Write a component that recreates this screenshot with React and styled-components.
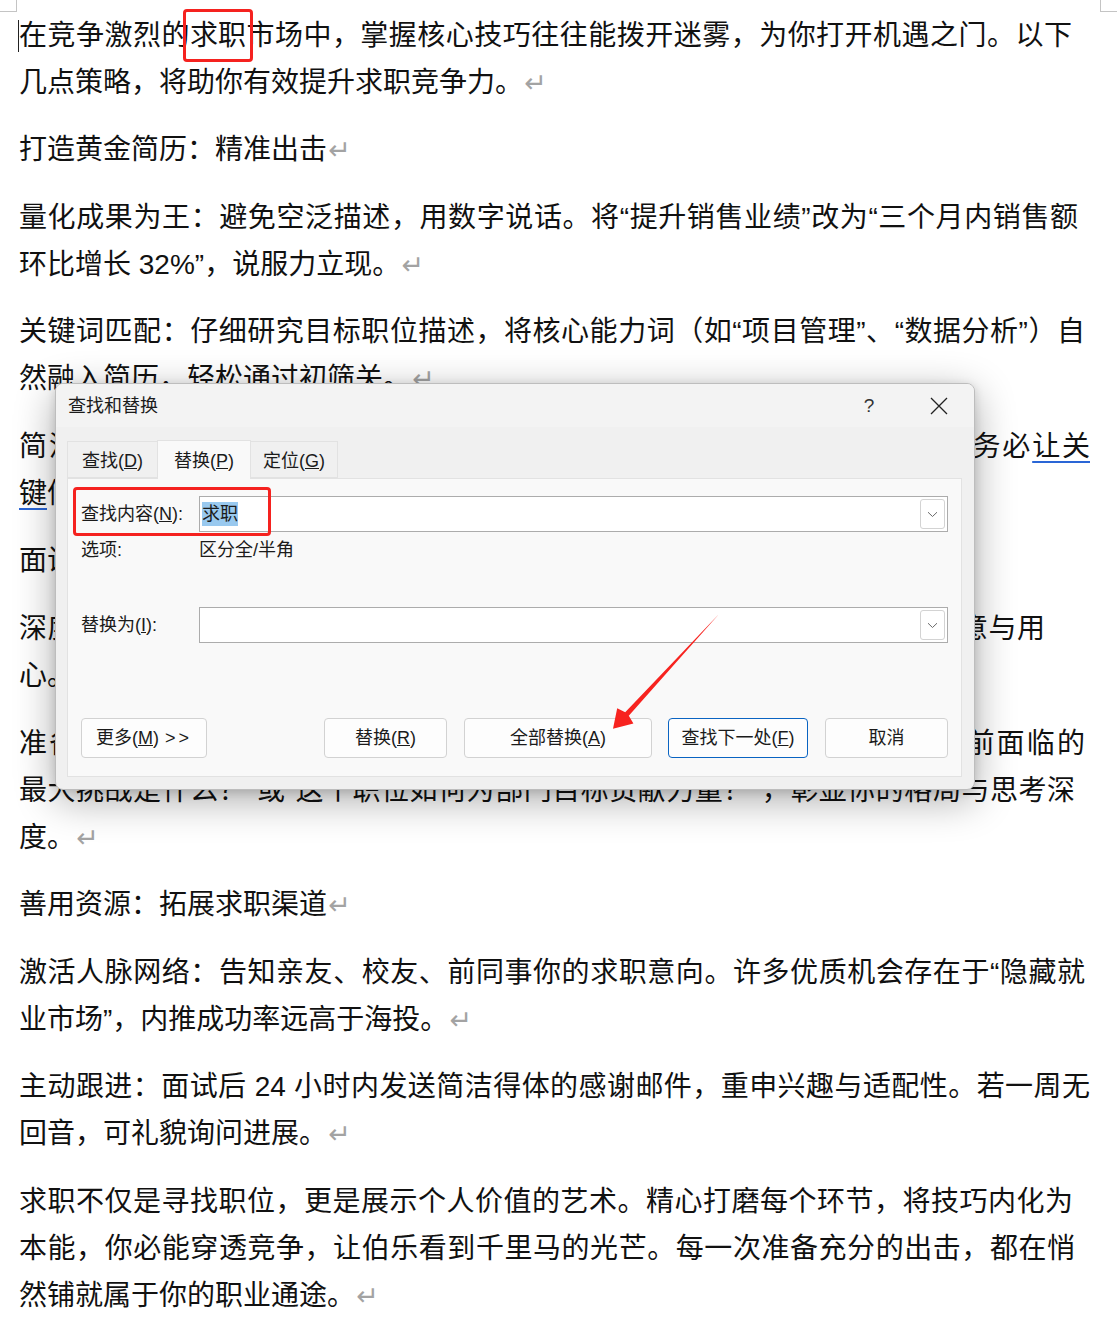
import React from 'react'
import styled, { createGlobalStyle } from 'styled-components'

const GlobalStyle = createGlobalStyle`
  html, body {
    margin: 0;
    padding: 0;
    background: #ffffff;
    overflow: hidden;
  }
`

const Page = styled.div`
  position: relative;
  width: 1117px;
  height: 1339px;
  box-sizing: border-box;
  padding: 11.5px 0 0 19px;
  font-family: 'Liberation Sans', 'Noto Sans CJK SC', sans-serif;
  font-size: 28px;
  line-height: 47px;
  color: #111;
  overflow: hidden;
`

const Corner = styled.div`
  position: absolute;
  top: 0;
  width: 16px;
  height: 11px;
  border-bottom: 1px solid #c4c4c4;
  ${p => (p.$right ? 'right: 0; border-left: 1px solid #c4c4c4;' : 'left: 0; border-right: 1px solid #c4c4c4;')}
`

const Caret = styled.div`
  position: absolute;
  left: 18px;
  top: 20px;
  width: 1px;
  height: 32px;
  background: #222;
`

const Para = styled.div`
  margin-bottom: 20.6px;
`

const Line = styled.div`
  height: 47px;
  width: ${p => (p.$w ? `${p.$w}px` : 'auto')};
  white-space: nowrap;
  text-align: ${p => (p.$w ? 'justify' : 'left')};
  text-align-last: ${p => (p.$w ? 'justify' : 'auto')};
`

const Mark = styled.span`
  font-family: 'DejaVu Sans', sans-serif;
  font-size: 27px;
  line-height: 0;
  color: #a3a3a3;
  margin-left: 1px;
`

const Hit = styled.span`
  position: relative;
  display: inline-block;
  line-height: 47px;
  &::after {
    content: '';
    position: absolute;
    left: -7px;
    right: -7px;
    top: -3px;
    bottom: -3px;
    border: 3.5px solid #f5221f;
    border-radius: 4px;
  }
`

const Grammar = styled.span`
  text-decoration: underline;
  text-decoration-color: #2a66d6;
  text-decoration-thickness: 1.5px;
  text-underline-offset: 5px;
`

/* ---------- dialog ---------- */

const Dialog = styled.div`
  position: absolute;
  left: 55px;
  top: 383px;
  width: 920px;
  height: 407px;
  box-sizing: border-box;
  display: flex;
  flex-direction: column;
  background: #f0f0f0;
  border: 1px solid #bdbdbd;
  border-radius: 8px;
  box-shadow: 0 10px 40px rgba(0, 0, 0, 0.33), 0 2px 10px rgba(0, 0, 0, 0.14);
  font-family: 'Liberation Sans', 'Noto Sans CJK SC', sans-serif;
  font-size: 18px;
  line-height: 1;
  color: #1b1b1b;
  overflow: hidden;
`

const TitleBar = styled.div`
  height: 43px;
  display: flex;
  align-items: center;
  background: #f3f3f3;
  padding-left: 12px;
`

const Title = styled.div`
  flex: 1;
  font-size: 18px;
`

const TitleButton = styled.div`
  width: 70px;
  height: 43px;
  display: flex;
  align-items: center;
  justify-content: center;
  font-size: 19px;
  color: #333;
`

const Body = styled.div`
  flex: 1;
  display: flex;
  flex-direction: column;
  padding: 14px 12px 0 11px;
`

const Tabs = styled.div`
  display: flex;
  align-items: flex-end;
  height: 37px;
  position: relative;
  z-index: 1;
`

const Tab = styled.div`
  box-sizing: border-box;
  width: ${p => p.$w}px;
  height: ${p => (p.$active ? 39 : 37)}px;
  margin-bottom: ${p => (p.$active ? -1 : 0)}px;
  display: flex;
  align-items: center;
  justify-content: center;
  padding-top: 2px;
  border: 1px solid #e2e2e2;
  border-bottom: ${p => (p.$active ? 'none' : '1px solid #e2e2e2')};
  background: ${p => (p.$active ? '#f9f9f9' : '#f0f0f0')};
  margin-right: -1px;
`

const Panel = styled.div`
  height: 299px;
  box-sizing: border-box;
  display: flex;
  flex-direction: column;
  background: #f9f9f9;
  border: 1px solid #e2e2e2;
  padding: 17px 13px 18px 13px;
`

const FieldRow = styled.div`
  position: relative;
  display: flex;
  align-items: center;
  height: 36px;
  margin-top: ${p => p.$mt || 0}px;
`

const Label = styled.div`
  width: 118px;
  flex-shrink: 0;
`

const Field = styled.div`
  flex: 1;
  height: 36px;
  box-sizing: border-box;
  display: flex;
  align-items: center;
  background: #fff;
  border: 1px solid #acacac;
  padding: 0 2px 0 2px;
`

const Selected = styled.span`
  background: #99c9ef;
  padding: 3px 0 3px;
  line-height: 18px;
`

const DropButton = styled.div`
  margin-left: auto;
  width: 25px;
  height: 30px;
  box-sizing: border-box;
  border: 1px solid #d3d3d3;
  border-radius: 3px;
  display: flex;
  align-items: center;
  justify-content: center;
`

const RedBox = styled.div`
  position: absolute;
  left: -8px;
  top: -9px;
  width: 198px;
  height: 49px;
  box-sizing: border-box;
  border: 3px solid #f5221f;
  border-radius: 4px;
  pointer-events: none;
`

const OptionsRow = styled.div`
  display: flex;
  align-items: center;
  height: 24px;
  margin-top: 6px;
`

const ButtonRow = styled.div`
  display: flex;
  align-items: center;
  margin-top: 75px;
  height: 40px;
`

const Button = styled.div`
  width: ${p => p.$w}px;
  height: 40px;
  box-sizing: border-box;
  display: flex;
  align-items: center;
  justify-content: center;
  background: #fdfdfd;
  border: ${p => (p.$primary ? '1.5px solid #0a64c2' : '1px solid #d2d2d2')};
  border-radius: 4px;
  margin-left: ${p => (p.$push ? 'auto' : `${p.$gap || 0}px`)};
`

const Arrows = styled.span`
  letter-spacing: 3px;
  margin-left: 6px;
`

const ArrowSvg = styled.svg`
  position: absolute;
  left: 600px;
  top: 605px;
  width: 125px;
  height: 130px;
  pointer-events: none;
`

function Chevron() {
  return (
    <svg width="11" height="7" viewBox="0 0 11 7">
      <path d="M1 1.2 5.5 5.5 10 1.2" fill="none" stroke="#6a6a6a" strokeWidth="1" />
    </svg>
  )
}

function CloseIcon() {
  return (
    <svg width="18" height="18" viewBox="0 0 18 18">
      <path d="M1 1 17 17M17 1 1 17" stroke="#222" strokeWidth="1.3" fill="none" />
    </svg>
  )
}

export default function App() {
  return (
    <>
      <GlobalStyle />
      <Page>
        <Corner />
        <Corner $right />
        <Caret />

        <Para>
          <Line $w={1053}>在竞争激烈的<Hit>求职</Hit>市场中，掌握核心技巧往往能拨开迷雾，为你打开机遇之门。以下</Line>
          <Line>几点策略，将助你有效提升求职竞争力。<Mark>↵</Mark></Line>
        </Para>
        <Para>
          <Line>打造黄金简历：精准出击<Mark>↵</Mark></Line>
        </Para>
        <Para>
          <Line $w={1059}>量化成果为王：避免空泛描述，用数字说话。将“提升销售业绩”改为“三个月内销售额</Line>
          <Line>环比增长 32%”，说服力立现。<Mark>↵</Mark></Line>
        </Para>
        <Para>
          <Line $w={1066}>关键词匹配：仔细研究目标职位描述，将核心能力词（如“项目管理”、“数据分析”）自</Line>
          <Line>然融入简历，轻松通过初筛关。<Mark>↵</Mark></Line>
        </Para>
        <Para>
          <Line $w={1071}>简洁专业：排版清晰，重点突出，避免错别字，用一页纸展现核心价值，务必<Grammar>让关</Grammar></Line>
          <Line><Grammar>键</Grammar>信息一目了然。<Mark>↵</Mark></Line>
        </Para>
        <Para>
          <Line>面试准备：展现真我风采<Mark>↵</Mark></Line>
        </Para>
        <Para>
          <Line $w={1026}>深度研究公司：了解企业文化、业务与近期动态，在回答中自然展现你的诚意与用</Line>
          <Line>心。<Mark>↵</Mark></Line>
        </Para>
        <Para>
          <Line $w={1066}>准备有深度的提问：在面试的尾声主动向面试官提问，例如“这个团队目前面临的</Line>
          <Line $w={1056}>最大挑战是什么？”或“这个职位如何为部门目标贡献力量？”，彰显你的格局与思考深</Line>
          <Line>度。<Mark>↵</Mark></Line>
        </Para>
        <Para>
          <Line>善用资源：拓展求职渠道<Mark>↵</Mark></Line>
        </Para>
        <Para>
          <Line $w={1066}>激活人脉网络：告知亲友、校友、前同事你的求职意向。许多优质机会存在于“隐藏就</Line>
          <Line>业市场”，内推成功率远高于海投。<Mark>↵</Mark></Line>
        </Para>
        <Para>
          <Line $w={1071}>主动跟进：面试后 24 小时内发送简洁得体的感谢邮件，重申兴趣与适配性。若一周无</Line>
          <Line>回音，可礼貌询问进展。<Mark>↵</Mark></Line>
        </Para>
        <Para>
          <Line $w={1054}>求职不仅是寻找职位，更是展示个人价值的艺术。精心打磨每个环节，将技巧内化为</Line>
          <Line $w={1056}>本能，你必能穿透竞争，让伯乐看到千里马的光芒。每一次准备充分的出击，都在悄</Line>
          <Line>然铺就属于你的职业通途。<Mark>↵</Mark></Line>
        </Para>

        <Dialog>
          <TitleBar>
            <Title>查找和替换</Title>
            <TitleButton>?</TitleButton>
            <TitleButton><CloseIcon /></TitleButton>
          </TitleBar>
          <Body>
            <Tabs>
              <Tab $w={91}>查找(<u>D</u>)</Tab>
              <Tab $w={94} $active>替换(<u>P</u>)</Tab>
              <Tab $w={88}>定位(<u>G</u>)</Tab>
            </Tabs>
            <Panel>
              <FieldRow>
                <Label>查找内容(<u>N</u>):</Label>
                <Field>
                  <Selected>求职</Selected>
                  <DropButton><Chevron /></DropButton>
                </Field>
                <RedBox />
              </FieldRow>
              <OptionsRow>
                <Label>选项:</Label>
                <div>区分全/半角</div>
              </OptionsRow>
              <FieldRow $mt={45}>
                <Label>替换为(<u>I</u>):</Label>
                <Field>
                  <DropButton><Chevron /></DropButton>
                </Field>
              </FieldRow>
              <ButtonRow>
                <Button $w={126}>更多(<u>M</u>)<Arrows>&gt;&gt;</Arrows></Button>
                <Button $w={123} $push>替换(<u>R</u>)</Button>
                <Button $w={188} $gap={17}>全部替换(<u>A</u>)</Button>
                <Button $w={140} $gap={16} $primary>查找下一处(<u>F</u>)</Button>
                <Button $w={123} $gap={17}>取消</Button>
              </ButtonRow>
            </Panel>
          </Body>
        </Dialog>

        <ArrowSvg viewBox="600 605 125 130">
          <polygon
            points="718.6,614.5 628.8,715.7 633.4,723.6 613,728.8 617.2,708.3 625.2,712.3 717.6,615.5"
            fill="#f7231f"
          />
        </ArrowSvg>
      </Page>
    </>
  )
}
